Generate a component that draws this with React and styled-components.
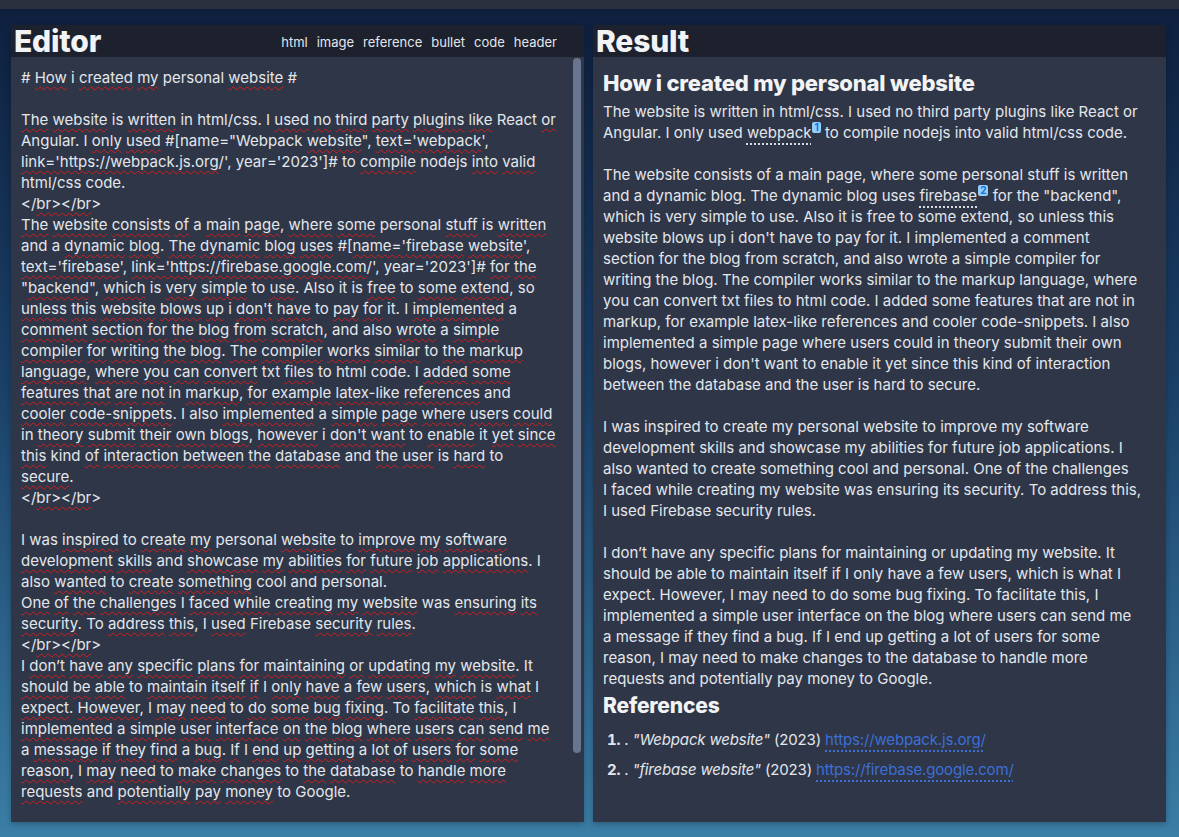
// libraries
import styled, { createGlobalStyle } from 'styled-components';

const GlobalStyle = createGlobalStyle`
  body {
    margin: 0;
    font-family: Inter, 'Open Sans', 'Liberation Sans', sans-serif;
  }
`;

const Page = styled.div`
  min-height: 837px;
  background: linear-gradient(180deg, #0e1f3d 0%, #1a3f66 45%, #3b7ea6 100%);
  display: flex;
  flex-direction: column;
`;

const TopBar = styled.div`
  height: 9px;
  background: #2a303d;
`;

const Workspace = styled.main`
  display: grid;
  grid-template-columns: 573px 573px;
  gap: 9px;
  padding: 16px 13px 15px 11px;
`;

const Panel = styled.section`
  height: 797px;
  display: flex;
  flex-direction: column;
  background: #2e3648;
  box-shadow: 0 2px 6px rgba(0, 0, 0, 0.25);
`;

const PanelHeader = styled.header`
  height: 32px;
  flex: none;
  background: #1c212d;
  display: flex;
  align-items: center;
  justify-content: space-between;
  padding: 0 27px 0 3px;
`;

const Title = styled.h1`
  margin: 0;
  font-size: 30px;
  line-height: 32px;
  font-weight: 800;
  letter-spacing: -0.2px;
  color: #f2f3f5;
`;

const Tabs = styled.nav`
  display: flex;
  gap: 9px;
  padding-top: 2px;
`;

const Tab = styled.span`
  font-size: 13px;
  color: #e3e5ea;
`;

const EditorArea = styled.div`
  flex: 1;
  position: relative;
  overflow: hidden;
`;

const EditorBody = styled.div`
  height: 100%;
  box-sizing: border-box;
  overflow: hidden;
  padding: 10px 0 0 10px;
  font-size: 15px;
  line-height: 21px;
  color: #e4e6eb;
`;

const ScrollThumb = styled.div`
  position: absolute;
  top: 1px;
  right: 3px;
  width: 8px;
  height: 695px;
  border-radius: 4px;
  background: #68758f;
`;

const Line = styled.div`
  white-space: pre;
  height: 21px;
`;

const Misspelled = styled.span`
  text-decoration: underline wavy #d41c1c;
  text-decoration-thickness: 1px;
  text-underline-offset: 3px;
  text-decoration-skip-ink: none;
`;

const ResultBody = styled.div`
  flex: 1;
  padding: 11px 10px 0 10px;
  color: #e4e6eb;
  font-size: 15px;
  line-height: 21px;
`;

const Heading = styled.h2`
  margin: ${({ $top }) => $top}px 0 3px;
  font-size: ${({ $size }) => $size}px;
  line-height: ${({ $size }) => $size + 8}px;
  font-weight: 800;
  letter-spacing: -0.2px;
  color: #f2f3f5;
`;

const Paragraph = styled.p`
  margin: 0 0 21px;

  &:last-of-type {
    margin-bottom: 0;
  }
`;

const Ref = styled.span`
  text-decoration: underline dotted #d8dbe2;
  text-decoration-thickness: 2px;
  text-underline-offset: 5px;
`;

const Badge = styled.sup`
  display: inline-block;
  font-size: 10px;
  line-height: 11px;
  padding: 0 2px;
  margin-left: 1px;
  border-radius: 2px;
  background: #8fd0fb;
  color: #1f6fd6;
  font-weight: 700;
  vertical-align: 7px;
`;

const RefList = styled.ol`
  margin: 5px 0 0;
  padding-left: 4px;
  list-style-position: inside;
  letter-spacing: -0.15px;

  li {
    line-height: 30px;
  }

  li::marker {
    font-weight: 700;
  }
`;

const Link = styled.a`
  color: #3d6fd6;
  text-decoration: underline dotted #3d6fd6;
  text-decoration-thickness: 2px;
  text-underline-offset: 5px;
`;

// words the (german) spellchecker accepts
const KNOWN = new Set([
  'i', 'I', 'a', 'and', 'in', 'was', 'also', 'personal', 'kind', 'cool', 'so', 'is', 'it',
  'man', 'to', 'die', 'html', 'css', 'React', 'Angular', 'Webpack', 'Firebase', 'Google',
  'code', 'name', 'text', 'link', 'year', 'https', 'webpack', 'js', 'org', 'firebase', 'google',
  'com', 'nodejs', 'txt',
]);

const tabs = ['html', 'image', 'reference', 'bullet', 'code', 'header'];

const editorLines = [
  '# How i created my personal website #',
  '',
  'The website is written in html/css. I used no third party plugins like React or',
  'Angular. I only used #[name="Webpack website", text=\'webpack\',',
  "link='https://webpack.js.org/', year='2023']# to compile nodejs into valid",
  'html/css code.',
  '</br></br>',
  'The website consists of a main page, where some personal stuff is written',
  "and a dynamic blog. The dynamic blog uses #[name='firebase website',",
  "text='firebase', link='https://firebase.google.com/', year='2023']# for the",
  '"backend", which is very simple to use. Also it is free to some extend, so',
  "unless this website blows up i don't have to pay for it. I implemented a",
  'comment section for the blog from scratch, and also wrote a simple',
  'compiler for writing the blog. The compiler works similar to the markup',
  'language, where you can convert txt files to html code. I added some',
  'features that are not in markup, for example latex-like references and',
  'cooler code-snippets. I also implemented a simple page where users could',
  "in theory submit their own blogs, however i don't want to enable it yet since",
  'this kind of interaction between the database and the user is hard to',
  'secure.',
  '</br></br>',
  '',
  'I was inspired to create my personal website to improve my software',
  'development skills and showcase my abilities for future job applications. I',
  'also wanted to create something cool and personal.',
  'One of the challenges I faced while creating my website was ensuring its',
  'security. To address this, I used Firebase security rules.',
  '</br></br>',
  'I don’t have any specific plans for maintaining or updating my website. It',
  'should be able to maintain itself if I only have a few users, which is what I',
  'expect. However, I may need to do some bug fixing. To facilitate this, I',
  'implemented a simple user interface on the blog where users can send me',
  'a message if they find a bug. If I end up getting a lot of users for some',
  'reason, I may need to make changes to the database to handle more',
  'requests and potentially pay money to Google.',
];

const paragraphs = [
  [
    'The website is written in html/css. I used no third party plugins like React or',
    'Angular. I only used [[webpack|1]] to compile nodejs into valid html/css code.',
  ],
  [
    'The website consists of a main page, where some personal stuff is written',
    'and a dynamic blog. The dynamic blog uses [[firebase|2]] for the "backend",',
    'which is very simple to use. Also it is free to some extend, so unless this',
    "website blows up i don't have to pay for it. I implemented a comment",
    'section for the blog from scratch, and also wrote a simple compiler for',
    'writing the blog. The compiler works similar to the markup language, where',
    'you can convert txt files to html code. I added some features that are not in',
    'markup, for example latex-like references and cooler code-snippets. I also',
    'implemented a simple page where users could in theory submit their own',
    "blogs, however i don't want to enable it yet since this kind of interaction",
    'between the database and the user is hard to secure.',
  ],
  [
    'I was inspired to create my personal website to improve my software',
    'development skills and showcase my abilities for future job applications. I',
    'also wanted to create something cool and personal. One of the challenges',
    'I faced while creating my website was ensuring its security. To address this,',
    'I used Firebase security rules.',
  ],
  [
    'I don’t have any specific plans for maintaining or updating my website. It',
    'should be able to maintain itself if I only have a few users, which is what I',
    'expect. However, I may need to do some bug fixing. To facilitate this, I',
    'implemented a simple user interface on the blog where users can send me',
    'a message if they find a bug. If I end up getting a lot of users for some',
    'reason, I may need to make changes to the database to handle more',
    'requests and potentially pay money to Google.',
  ],
];

const references = [
  { name: 'Webpack website', year: '2023', link: 'https://webpack.js.org/' },
  { name: 'firebase website', year: '2023', link: 'https://firebase.google.com/' },
];

const spellcheck = (line) =>
  line.split(/(\s+)/).map((token, i) => {
    const words = token.match(/[A-Za-z’']+/g) || [];
    const bare = words.map((w) => w.replace(/['’]$/, '')).filter(Boolean);
    const wrong = bare.some((w) => w.length > 1 && !KNOWN.has(w) && !KNOWN.has(w.toLowerCase()));
    if (!wrong) return token;
    const lead = token.match(/^[^A-Za-z]*/)[0];
    const trail = token.match(/[^A-Za-z]*$/)[0];
    const core = token.slice(lead.length, token.length - trail.length);
    return (
      <span key={i}>
        {lead}
        <Misspelled>{core}</Misspelled>
        {trail}
      </span>
    );
  });

const renderRich = (line) =>
  line.split(/(\[\[[^\]]+\]\])/).map((part, i) => {
    const match = part.match(/^\[\[(.+)\|(\d)\]\]$/);
    if (!match) return part;
    return (
      <span key={i}>
        <Ref>{match[1]}</Ref>
        <Badge>{match[2]}</Badge>
      </span>
    );
  });

const Lines = ({ lines }) =>
  lines.map((line, i) => (
    <span key={i}>
      {renderRich(line)}
      {i < lines.length - 1 && <br />}
    </span>
  ));

const App = () => {
  return (
    <Page>
      <GlobalStyle />
      <TopBar />
      <Workspace>
        <Panel>
          <PanelHeader>
            <Title>Editor</Title>
            <Tabs>
              {tabs.map((tab) => (
                <Tab key={tab}>{tab}</Tab>
              ))}
            </Tabs>
          </PanelHeader>
          <EditorArea>
            <EditorBody>
              {editorLines.map((line, i) => (
                <Line key={i}>{spellcheck(line)}</Line>
              ))}
            </EditorBody>
            <ScrollThumb />
          </EditorArea>
        </Panel>
        <Panel>
          <PanelHeader>
            <Title>Result</Title>
          </PanelHeader>
          <ResultBody>
            <Heading $size={22} $top={0}>
              How i created my personal website
            </Heading>
            {paragraphs.map((lines, i) => (
              <Paragraph key={i}>
                <Lines lines={lines} />
              </Paragraph>
            ))}
            <Heading $size={21} $top={2}>
              References
            </Heading>
            <RefList>
              {references.map(({ name, year, link }) => (
                <li key={link}>
                  . <em>"{name}"</em> ({year}) <Link href={link}>{link}</Link>
                </li>
              ))}
            </RefList>
          </ResultBody>
        </Panel>
      </Workspace>
    </Page>
  );
};

export default App;
